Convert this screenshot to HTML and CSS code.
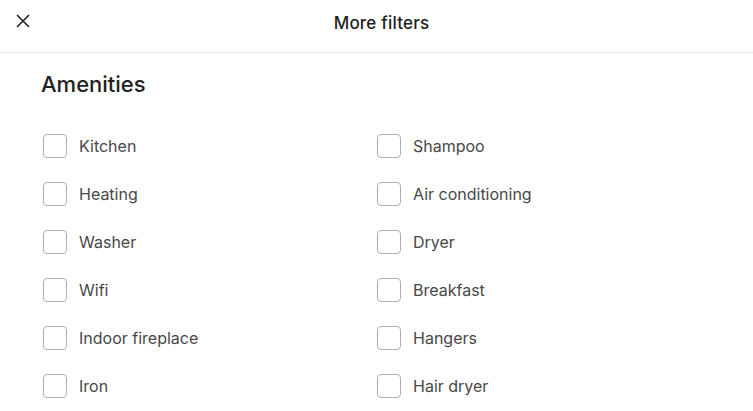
FILE: index.html
```html
<!DOCTYPE html>
<html>
<head>
<meta charset="utf-8">
<link rel="stylesheet" href="styles.css">
</head>
<body>
<header class="bar">
  <button class="close" aria-label="Close">
    <svg width="14" height="14" viewBox="0 0 14 14"><path d="M1 1L13 13M13 1L1 13" stroke="#222" stroke-width="1.6" fill="none"/></svg>
  </button>
  <div class="title">More filters</div>
</header>
<main class="content">
  <h2 class="heading">Amenities</h2>
  <div class="grid">
    <label class="item"><span class="box"></span>Kitchen</label>
    <label class="item"><span class="box"></span>Shampoo</label>
    <label class="item"><span class="box"></span>Heating</label>
    <label class="item"><span class="box"></span>Air conditioning</label>
    <label class="item"><span class="box"></span>Washer</label>
    <label class="item"><span class="box"></span>Dryer</label>
    <label class="item"><span class="box"></span>Wifi</label>
    <label class="item"><span class="box"></span>Breakfast</label>
    <label class="item"><span class="box"></span>Indoor fireplace</label>
    <label class="item"><span class="box"></span>Hangers</label>
    <label class="item"><span class="box"></span>Iron</label>
    <label class="item"><span class="box"></span>Hair dryer</label>
  </div>
</main>
</body>
</html>
```
FILE: styles.css
```css
* { box-sizing: border-box; }
body {
  margin: 0;
  font-family: "Inter", "Noto Sans", sans-serif;
  color: #222;
  background: #fff;
}
.bar {
  position: relative;
  height: 53px;
  border-bottom: 1px solid #ebebeb;
  display: flex;
  align-items: center;
  justify-content: center;
}
.close {
  position: absolute;
  left: 16px;
  top: 14px;
  width: 14px;
  height: 14px;
  padding: 0;
  border: 0;
  background: none;
  display: flex;
}
.title {
  font-size: 17px;
  font-weight: 500;
  letter-spacing: 0.2px;
  color: #222;
  margin-top: -6px;
  margin-left: 10px;
}
.content {
  padding: 0 0 0 41px;
}
.heading {
  margin: 18px 0 0 0;
  font-size: 22px;
  line-height: 26px;
  font-weight: 500;
  color: #222;
}
.grid {
  display: grid;
  grid-template-columns: 334px 334px;
  margin-top: 37px;
  margin-left: 2px;
  row-gap: 24px;
}
.item {
  display: flex;
  align-items: center;
  height: 24px;
  font-size: 16px;
  color: #484848;
}
.box {
  width: 24px;
  height: 24px;
  border: 1px solid #b0b0b0;
  border-radius: 4px;
  margin-right: 12px;
  flex: none;
}
```
